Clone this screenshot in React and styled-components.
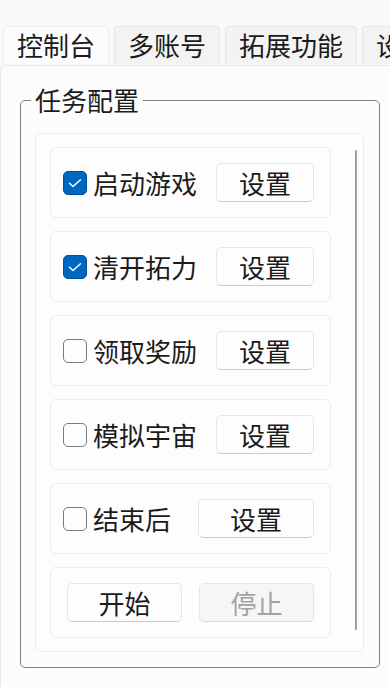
import styled, { createGlobalStyle } from "styled-components";

const Global = createGlobalStyle`
  html, body {
    margin: 0;
    padding: 0;
    background: #f9f9f9;
    overflow: hidden;
  }
  body {
    font-family: "Noto Sans CJK SC", "Noto Sans", sans-serif;
    color: #1b1b1b;
  }
`;

const Window = styled.div`
  width: 390px;
  height: 687px;
  display: flex;
  flex-direction: column;
  padding-top: 26px;
  box-sizing: border-box;
`;

const TabBar = styled.div`
  display: flex;
  gap: 5px;
  padding-left: 3px;
  white-space: nowrap;
  overflow: hidden;
`;

const Tab = styled.div`
  flex: none;
  height: 38px;
  box-sizing: border-box;
  padding: 0 13px;
  font-size: 26px;
  line-height: 36px;
  border: 1px solid ${(p) => (p.$active ? "#ececec" : "#e6e6e6")};
  border-bottom: none;
  border-radius: 4px 4px 0 0;
  background: ${(p) => (p.$active ? "#fcfcfc" : "#f3f3f3")};
`;

const Panel = styled.div`
  flex: 1;
  margin-top: 1px;
  background: #fcfcfc;
  border-top: 1px solid #e8e8e8;
  border-left: 1px solid #e8e8e8;
  border-radius: 6px 0 0 0;
  padding: 17px 10px 0 19px;
`;

const Group = styled.fieldset`
  margin: 0;
  padding: 16px 15px 15px 14px;
  border: 1px solid #7f7f7f;
  border-radius: 5px;
`;

const Legend = styled.legend`
  font-size: 26px;
  line-height: 34px;
  padding: 0 4px;
  margin-left: -4px;
`;

const ScrollArea = styled.div`
  display: flex;
  height: 519px;
  box-sizing: border-box;
  background: #fdfdfd;
  border: 1px solid #ededed;
  border-radius: 6px;
  padding: 13px 0 12px 14px;
`;

const List = styled.div`
  width: 281px;
  display: flex;
  flex-direction: column;
  gap: 13px;
`;

const ScrollBar = styled.div`
  width: 2px;
  margin: 3px 0 9px 24px;
  background: linear-gradient(to right, #8a8a8a, #b5b5b5);
  border-radius: 1px;
`;

const Card = styled.div`
  height: 71px;
  box-sizing: border-box;
  border: 1px solid #ececec;
  border-radius: 6px;
  background: #fdfdfd;
  display: flex;
  align-items: center;
  justify-content: space-between;
  padding: 0 16px 0 12px;
`;

const ActionCard = styled(Card)`
  display: grid;
  grid-template-columns: 1fr 1fr;
  gap: 17px;
  padding: 0 16px 0 16px;
`;

const Option = styled.label`
  display: flex;
  align-items: center;
  gap: 6px;
  font-size: 26px;
  line-height: 34px;
`;

const Box = styled.span`
  width: 24px;
  height: 24px;
  box-sizing: border-box;
  border-radius: 5px;
  border: 1px solid ${(p) => (p.$checked ? "#00509a" : "#7a7a7a")};
  background: ${(p) => (p.$checked ? "#0067c0" : "#fdfdfd")};
  display: flex;
  align-items: center;
  justify-content: center;
`;

const Button = styled.button`
  width: ${(p) => p.$width || "98px"};
  height: 39px;
  box-sizing: border-box;
  font-family: inherit;
  font-size: 26px;
  line-height: 1;
  padding: 0;
  color: ${(p) => (p.disabled ? "#a2a2a2" : "#1b1b1b")};
  background: ${(p) => (p.disabled ? "#f6f6f6" : "#fdfdfd")};
  border: 1px solid #e6e6e6;
  border-bottom-color: ${(p) => (p.disabled ? "#d8d8d8" : "#c9c9c9")};
  border-radius: 5px;
`;

const Checkbox = ({ checked }) => (
  <Box $checked={checked}>
    {checked && (
      <svg width="18" height="18" viewBox="0 0 18 18">
        <path
          d="M3.5 9.2 L7 12.5 L14.5 5.8"
          fill="none"
          stroke="#fff"
          strokeWidth="1.5"
          strokeLinecap="round"
          strokeLinejoin="round"
        />
      </svg>
    )}
  </Box>
);

const tasks = [
  { name: "启动游戏", checked: true },
  { name: "清开拓力", checked: true },
  { name: "领取奖励", checked: false },
  { name: "模拟宇宙", checked: false },
  { name: "结束后", checked: false, wide: true },
];

export default function App() {
  return (
    <>
      <Global />
      <Window>
        <TabBar>
          <Tab $active>控制台</Tab>
          <Tab>多账号</Tab>
          <Tab>拓展功能</Tab>
          <Tab>设置</Tab>
        </TabBar>
        <Panel>
          <Group>
            <Legend>任务配置</Legend>
            <ScrollArea>
              <List>
                {tasks.map((t) => (
                  <Card key={t.name}>
                    <Option>
                      <Checkbox checked={t.checked} />
                      {t.name}
                    </Option>
                    <Button $width={t.wide ? "116px" : "98px"}>设置</Button>
                  </Card>
                ))}
                <ActionCard>
                  <Button $width="100%">开始</Button>
                  <Button $width="100%" disabled>
                    停止
                  </Button>
                </ActionCard>
              </List>
              <ScrollBar />
            </ScrollArea>
          </Group>
        </Panel>
      </Window>
    </>
  );
}
